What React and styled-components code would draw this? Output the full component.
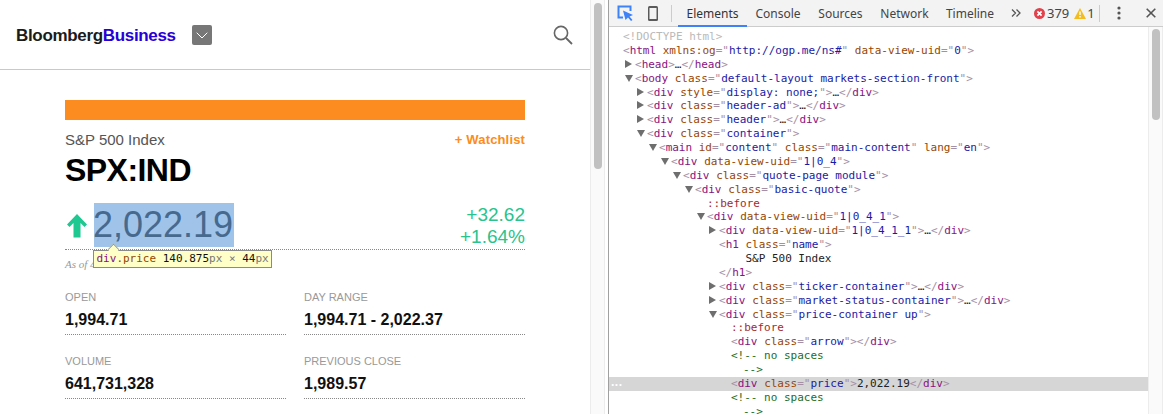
import React from "react";
import styled, { createGlobalStyle } from "styled-components";

const Global = createGlobalStyle`
  html, body { margin: 0; padding: 0; background: #fff; }
  #root { width: 1163px; height: 414px; overflow: hidden; }
`;

const Shell = styled.div`
  display: flex;
  width: 1163px;
  height: 414px;
  overflow: hidden;
  font-family: "Liberation Sans", Arial, sans-serif;
`;

const Page = styled.div`
  width: 590px;
  flex: none;
  height: 414px;
  overflow: hidden;
`;

const SiteHeader = styled.header`
  display: flex;
  align-items: center;
  height: 69px;
  box-sizing: content-box;
  border-bottom: 1px solid #c9c9c9;
  padding: 0 17px 0 16px;
`;

const Logo = styled.div`
  font-size: 17px;
  font-weight: 700;
  letter-spacing: -0.33px;
  line-height: 20px;
  padding-top: 2px;
  color: #1b1b1b;
  span { color: #2800d7; }
`;

const MenuButton = styled.div`
  width: 20px;
  height: 20px;
  margin: 1px 0 0 16px;
  border-radius: 2px;
  background: #777;
  display: flex;
  align-items: center;
  justify-content: center;
`;

const SearchButton = styled.div`
  margin-left: auto;
  display: flex;
`;

const Main = styled.main`
  padding: 30px 65px 0;
`;

const Banner = styled.div`
  height: 20px;
  background: #fd8c20;
`;

const NameRow = styled.div`
  display: flex;
  justify-content: space-between;
  align-items: center;
  margin-top: 10px;
  height: 18px;
`;

const IndexName = styled.div`
  font-size: 15px;
  color: #555;
`;

const Watch = styled.div`
  font-size: 13px;
  font-weight: 700;
  letter-spacing: 0.15px;
  color: #fd8c20;
`;

const Ticker = styled.h1`
  margin: 4px 0 0;
  font-size: 32px;
  line-height: 37px;
  font-weight: 700;
  letter-spacing: -0.55px;
  color: #000;
`;

const QuoteRow = styled.div`
  position: relative;
  display: flex;
  align-items: center;
  height: 46px;
  margin-top: 14px;
  border-bottom: 1px dotted #888;
`;

const Arrow = styled.svg`
  margin-left: 2px;
  flex: none;
`;

const PriceBox = styled.div`
  width: 140px;
  height: 44px;
  margin: 0 0 2px 7px;
  background: #a0c4e9;
  color: #46698d;
  font-size: 36px;
  line-height: 44px;
  text-indent: -1px;
`;

const Change = styled.div`
  margin-left: auto;
  text-align: right;
  font-size: 19px;
  line-height: 22px;
  color: #2ac38e;
`;

const Tip = styled.div`
  position: absolute;
  left: 28px;
  top: 47px;
  z-index: 2;
  height: 16px;
  padding: 0 2px 0 2.5px;
  background: #ffffc8;
  border: 1px solid #8a8a8a;
  font-family: "DejaVu Sans Mono", monospace;
  font-size: 11px;
  line-height: 16px;
  white-space: nowrap;
  color: #111;
  &::before {
    content: "";
    position: absolute;
    left: 14px;
    top: -7px;
    width: 10px;
    height: 10px;
    background: #ffffc8;
    border-left: 1px solid #8a8a8a;
    border-top: 1px solid #8a8a8a;
    transform: rotate(45deg) scale(0.75);
  }
  i { font-style: normal; color: #881280; position: relative; }
  b { font-weight: 400; color: #994500; position: relative; }
  u { text-decoration: none; color: #777; }
`;

const AsOf = styled.div`
  margin-top: 7px;
  height: 14px;
  font-family: "Liberation Serif", serif;
  font-style: italic;
  font-size: 11px;
  line-height: 14px;
  color: #999;
`;

const Stats = styled.div`
  display: grid;
  grid-template-columns: 221px 221px;
  column-gap: 18px;
  row-gap: 20px;
  margin-top: 20px;
`;

const Stat = styled.div`
  height: 43px;
  border-bottom: 1px dotted #888;
`;

const StatLabel = styled.div`
  font-size: 11px;
  line-height: 13px;
  color: #999;
`;

const StatValue = styled.div`
  margin-top: 6px;
  font-size: 16px;
  line-height: 20px;
  font-weight: 700;
  color: #111;
`;

const Track = styled.div`
  width: 15px;
  height: 414px;
  flex: none;
  box-sizing: border-box;
  background: #fafafa;
  border-left: 1px solid #ececec;
  border-right: 1px solid #ececec;
  padding-left: 3px;
  padding-top: ${(p) => p.$top}px;
`;

const Thumb = styled.div`
  width: 8px;
  height: ${(p) => p.$height}px;
  border-radius: 4px;
  background: #c1c1c1;
`;

const DevTools = styled.div`
  margin-left: 3px;
  flex: 1;
  min-width: 0;
  height: 414px;
  border-left: 1px solid #a0a0a0;
  display: flex;
  flex-direction: column;
  box-sizing: border-box;
`;

const Toolbar = styled.div`
  height: 26px;
  flex: none;
  display: flex;
  align-items: center;
  background: #f3f3f3;
  border-bottom: 1px solid #ccc;
  font-family: "Noto Sans", sans-serif;
  font-size: 12px;
  color: #444;
`;

const ToolIcon = styled.svg`
  flex: none;
  margin-left: ${(p) => p.$ml || 0}px;
`;

const Separator = styled.div`
  width: 1px;
  height: 17px;
  flex: none;
  background: #ccc;
  margin-left: ${(p) => p.$ml}px;
`;

const Tabs = styled.div`
  display: flex;
  height: 26px;
  margin-left: 6px;
`;

const Tab = styled.div`
  box-sizing: border-box;
  height: 27px;
  width: ${(p) => p.$w}px;
  text-align: center;
  line-height: 27px;
  color: ${(p) => (p.$active ? "#333" : "#444")};
  border-bottom: 2px solid ${(p) => (p.$active ? "#3e82f7" : "transparent")};
`;

const Count = styled.span`
  margin-left: ${(p) => p.$ml}px;
  color: #444;
  font-size: 13px;
`;

const Body = styled.div`
  flex: 1;
  min-height: 0;
  display: flex;
`;

const Tree = styled.div`
  flex: 1;
  min-width: 0;
  padding-top: 3px;
  overflow: hidden;
  font-family: "DejaVu Sans Mono", monospace;
  font-size: 11px;
`;

const Row = styled.div`
  position: relative;
  height: 13.875px;
  line-height: 13.875px;
  white-space: pre;
  box-sizing: border-box;
  padding-left: ${(p) => 14 + p.$level * 12}px;
  color: #222;
  background: ${(p) => (p.$selected ? "#d6d6d6" : "transparent")};
`;

const Toggle = styled.span`
  display: inline-block;
  width: 0;
  height: 0;
  margin-left: -10px;
  margin-right: ${(p) => (p.$open ? 2 : 3)}px;
  vertical-align: 0;
  ${(p) =>
    p.$open
      ? "border-left: 4px solid transparent; border-right: 4px solid transparent; border-top: 7px solid #6e6e6e;"
      : "border-top: 4.5px solid transparent; border-bottom: 4.5px solid transparent; border-left: 7px solid #6e6e6e;"}
`;

const tokenColors = {
  d: "#b9b9b9",
  b: "#a58fa5",
  t: "#881280",
  a: "#994500",
  v: "#1a1aa6",
  c: "#236e25",
  p: "#a52a2a",
  x: "#222",
};

const Token = styled.span`
  color: ${(p) => tokenColors[p.$kind]};
`;

const Ellipsis = styled.span`
  position: absolute;
  left: 2px;
  top: -1px;
  color: #fff;
  font-family: "Liberation Sans", sans-serif;
  font-size: 12px;
  font-weight: 700;
  letter-spacing: 0.5px;
`;

const open = (name, attrs = [], tail = [["b", ">"]]) => {
  const out = [["b", "<"], ["t", name]];
  attrs.forEach(([k, v]) => {
    out.push(["x", " "], ["a", k], ["b", '="'], ["v", v], ["b", '"']);
  });
  return out.concat(tail);
};
const closed = (name, attrs) =>
  open(name, attrs, [["b", ">"], ["x", "…"], ["b", "</"], ["t", name], ["b", ">"]]);
const cls = (v) => [["class", v]];

const rows = [
  { l: 0, c: [["d", "<!DOCTYPE html>"]] },
  { l: 0, c: open("html", [["xmlns:og", "http://ogp.me/ns#"], ["data-view-uid", "0"]]) },
  { l: 1, t: "r", c: closed("head") },
  { l: 1, t: "d", c: open("body", cls("default-layout markets-section-front")) },
  { l: 2, t: "r", c: closed("div", [["style", "display: none;"]]) },
  { l: 2, t: "r", c: closed("div", cls("header-ad")) },
  { l: 2, t: "r", c: closed("div", cls("header")) },
  { l: 2, t: "d", c: open("div", cls("container")) },
  { l: 3, t: "d", c: open("main", [["id", "content"], ["class", "main-content"], ["lang", "en"]]) },
  { l: 4, t: "d", c: open("div", [["data-view-uid", "1|0_4"]]) },
  { l: 5, t: "d", c: open("div", cls("quote-page module")) },
  { l: 6, t: "d", c: open("div", cls("basic-quote")) },
  { l: 7, c: [["p", "::before"]] },
  { l: 7, t: "d", c: open("div", [["data-view-uid", "1|0_4_1"]]) },
  { l: 8, t: "r", c: closed("div", [["data-view-uid", "1|0_4_1_1"]]) },
  { l: 8, c: open("h1", cls("name")) },
  { l: 10.2, c: [["x", "S&P 500 Index"]] },
  { l: 8, c: [["b", "</"], ["t", "h1"], ["b", ">"]] },
  { l: 8, t: "r", c: closed("div", cls("ticker-container")) },
  { l: 8, t: "r", c: closed("div", cls("market-status-container")) },
  { l: 8, t: "d", c: open("div", cls("price-container up")) },
  { l: 9, c: [["p", "::before"]] },
  { l: 9, c: open("div", cls("arrow"), [["b", "></"], ["t", "div"], ["b", ">"]]) },
  { l: 9, c: [["c", "<!-- no spaces"]] },
  { l: 10, c: [["c", "-->"]] },
  { l: 9, s: true, c: [...open("div", cls("price")), ["x", "2,022.19"], ["b", "</"], ["t", "div"], ["b", ">"]] },
  { l: 9, c: [["c", "<!-- no spaces"]] },
  { l: 10, c: [["c", "-->"]] },
];

const stats = [
  ["OPEN", "1,994.71"],
  ["DAY RANGE", "1,994.71 - 2,022.37"],
  ["VOLUME", "641,731,328"],
  ["PREVIOUS CLOSE", "1,989.57"],
];

export default function App() {
  return (
    <Shell>
      <Global />
      <Page>
        <SiteHeader>
          <Logo>
            Bloomberg<span>Business</span>
          </Logo>
          <MenuButton>
            <svg width="12" height="7" viewBox="0 0 12 7" fill="none">
              <path d="M0.7 0.7 L6 6 L11.3 0.7" stroke="#fff" strokeWidth="1" />
            </svg>
          </MenuButton>
          <SearchButton>
            <svg width="20" height="20" viewBox="0 0 20 20" fill="none">
              <circle cx="8" cy="8" r="6.6" stroke="#666" strokeWidth="1.6" />
              <path d="M13 13 L19 19" stroke="#666" strokeWidth="1.8" />
            </svg>
          </SearchButton>
        </SiteHeader>
        <Main>
          <Banner />
          <NameRow>
            <IndexName>S&amp;P 500 Index</IndexName>
            <Watch>+ Watchlist</Watch>
          </NameRow>
          <Ticker>SPX:IND</Ticker>
          <QuoteRow>
            <Arrow width="20" height="24" viewBox="0 0 20 24">
              <path d="M10 0 L20 10.5 L17.5 13 L13.5 9 V23.5 H6.5 V9 L2.5 13 L0 10.5 Z" fill="#1fc890" />
            </Arrow>
            <PriceBox>2,022.19</PriceBox>
            <Change>
              +32.62
              <br />
              +1.64%
            </Change>
            <Tip>
              <i>div</i>
              <b>.price</b> 140.875<u>px</u> <u>×</u> 44<u>px</u>
            </Tip>
          </QuoteRow>
          <AsOf>As of 4:04 PM EDT 10/05/2015</AsOf>
          <Stats>
            {stats.map(([k, v]) => (
              <Stat key={k}>
                <StatLabel>{k}</StatLabel>
                <StatValue>{v}</StatValue>
              </Stat>
            ))}
          </Stats>
        </Main>
      </Page>
      <Track $top={3}>
        <Thumb $height={166} />
      </Track>
      <DevTools>
        <Toolbar>
          <ToolIcon $ml={8} width="17" height="16" viewBox="0 0 17 16" fill="none">
            <path d="M6 12.5 H1.5 V1.5 H13.5 V6" stroke="#3e82f7" strokeWidth="2" />
            <path d="M6 5.5 L16 10 L12.5 11.5 L15.5 15 L14 16 L11 12.5 L8.5 15 Z" fill="#3e82f7" />
          </ToolIcon>
          <ToolIcon $ml={14} width="10" height="15" viewBox="0 0 10 15" fill="none">
            <rect x="0" y="0" width="10" height="15" rx="1.5" fill="#5a5a5a" />
            <rect x="1.5" y="2" width="7" height="11" fill="#f3f3f3" />
          </ToolIcon>
          <Separator $ml={13} />
          <Tabs>
            <Tab $active $w={69}>Elements</Tab>
            <Tab $w={62}>Console</Tab>
            <Tab $w={63}>Sources</Tab>
            <Tab $w={65}>Network</Tab>
            <Tab $w={66}>Timeline</Tab>
          </Tabs>
          <ToolIcon $ml={8} width="10" height="8" viewBox="0 0 10 8" fill="none">
            <path d="M1 0.5 L4.5 4 L1 7.5 M5.5 0.5 L9 4 L5.5 7.5" stroke="#555" strokeWidth="1.3" />
          </ToolIcon>
          <ToolIcon $ml={13} width="11" height="11" viewBox="0 0 11 11">
            <circle cx="5.5" cy="5.5" r="5.5" fill="#e2404b" />
            <path d="M3.4 3.4 L7.6 7.6 M7.6 3.4 L3.4 7.6" stroke="#fff" strokeWidth="1.7" />
          </ToolIcon>
          <Count $ml={2}>379</Count>
          <ToolIcon $ml={5} width="12" height="11" viewBox="0 0 12 11">
            <path d="M6 0 L12 11 H0 Z" fill="#f4bd1f" />
            <path d="M6 3.5 V7 M6 8 V9.6" stroke="#fff" strokeWidth="1.4" />
          </ToolIcon>
          <Count $ml={1}>1</Count>
          <Separator $ml={4} />
          <ToolIcon $ml={17} width="4" height="14" viewBox="0 0 4 14">
            <circle cx="2" cy="2" r="1.6" fill="#555" />
            <circle cx="2" cy="7" r="1.6" fill="#555" />
            <circle cx="2" cy="12" r="1.6" fill="#555" />
          </ToolIcon>
          <ToolIcon $ml={25} width="10" height="10" viewBox="0 0 10 10">
            <path d="M0.7 0.7 L9.3 9.3 M9.3 0.7 L0.7 9.3" stroke="#555" strokeWidth="1.6" />
          </ToolIcon>
        </Toolbar>
        <Body>
          <Tree>
            {rows.map((r, i) => (
              <Row key={i} $level={r.l} $selected={r.s}>
                {r.s && <Ellipsis>...</Ellipsis>}
                {r.t && <Toggle $open={r.t === "d"} />}
                {r.c.map(([k, text], j) => (
                  <Token key={j} $kind={k}>
                    {text}
                  </Token>
                ))}
              </Row>
            ))}
          </Tree>
          <Track $top={2}>
            <Thumb $height={91} />
          </Track>
        </Body>
      </DevTools>
    </Shell>
  );
}
